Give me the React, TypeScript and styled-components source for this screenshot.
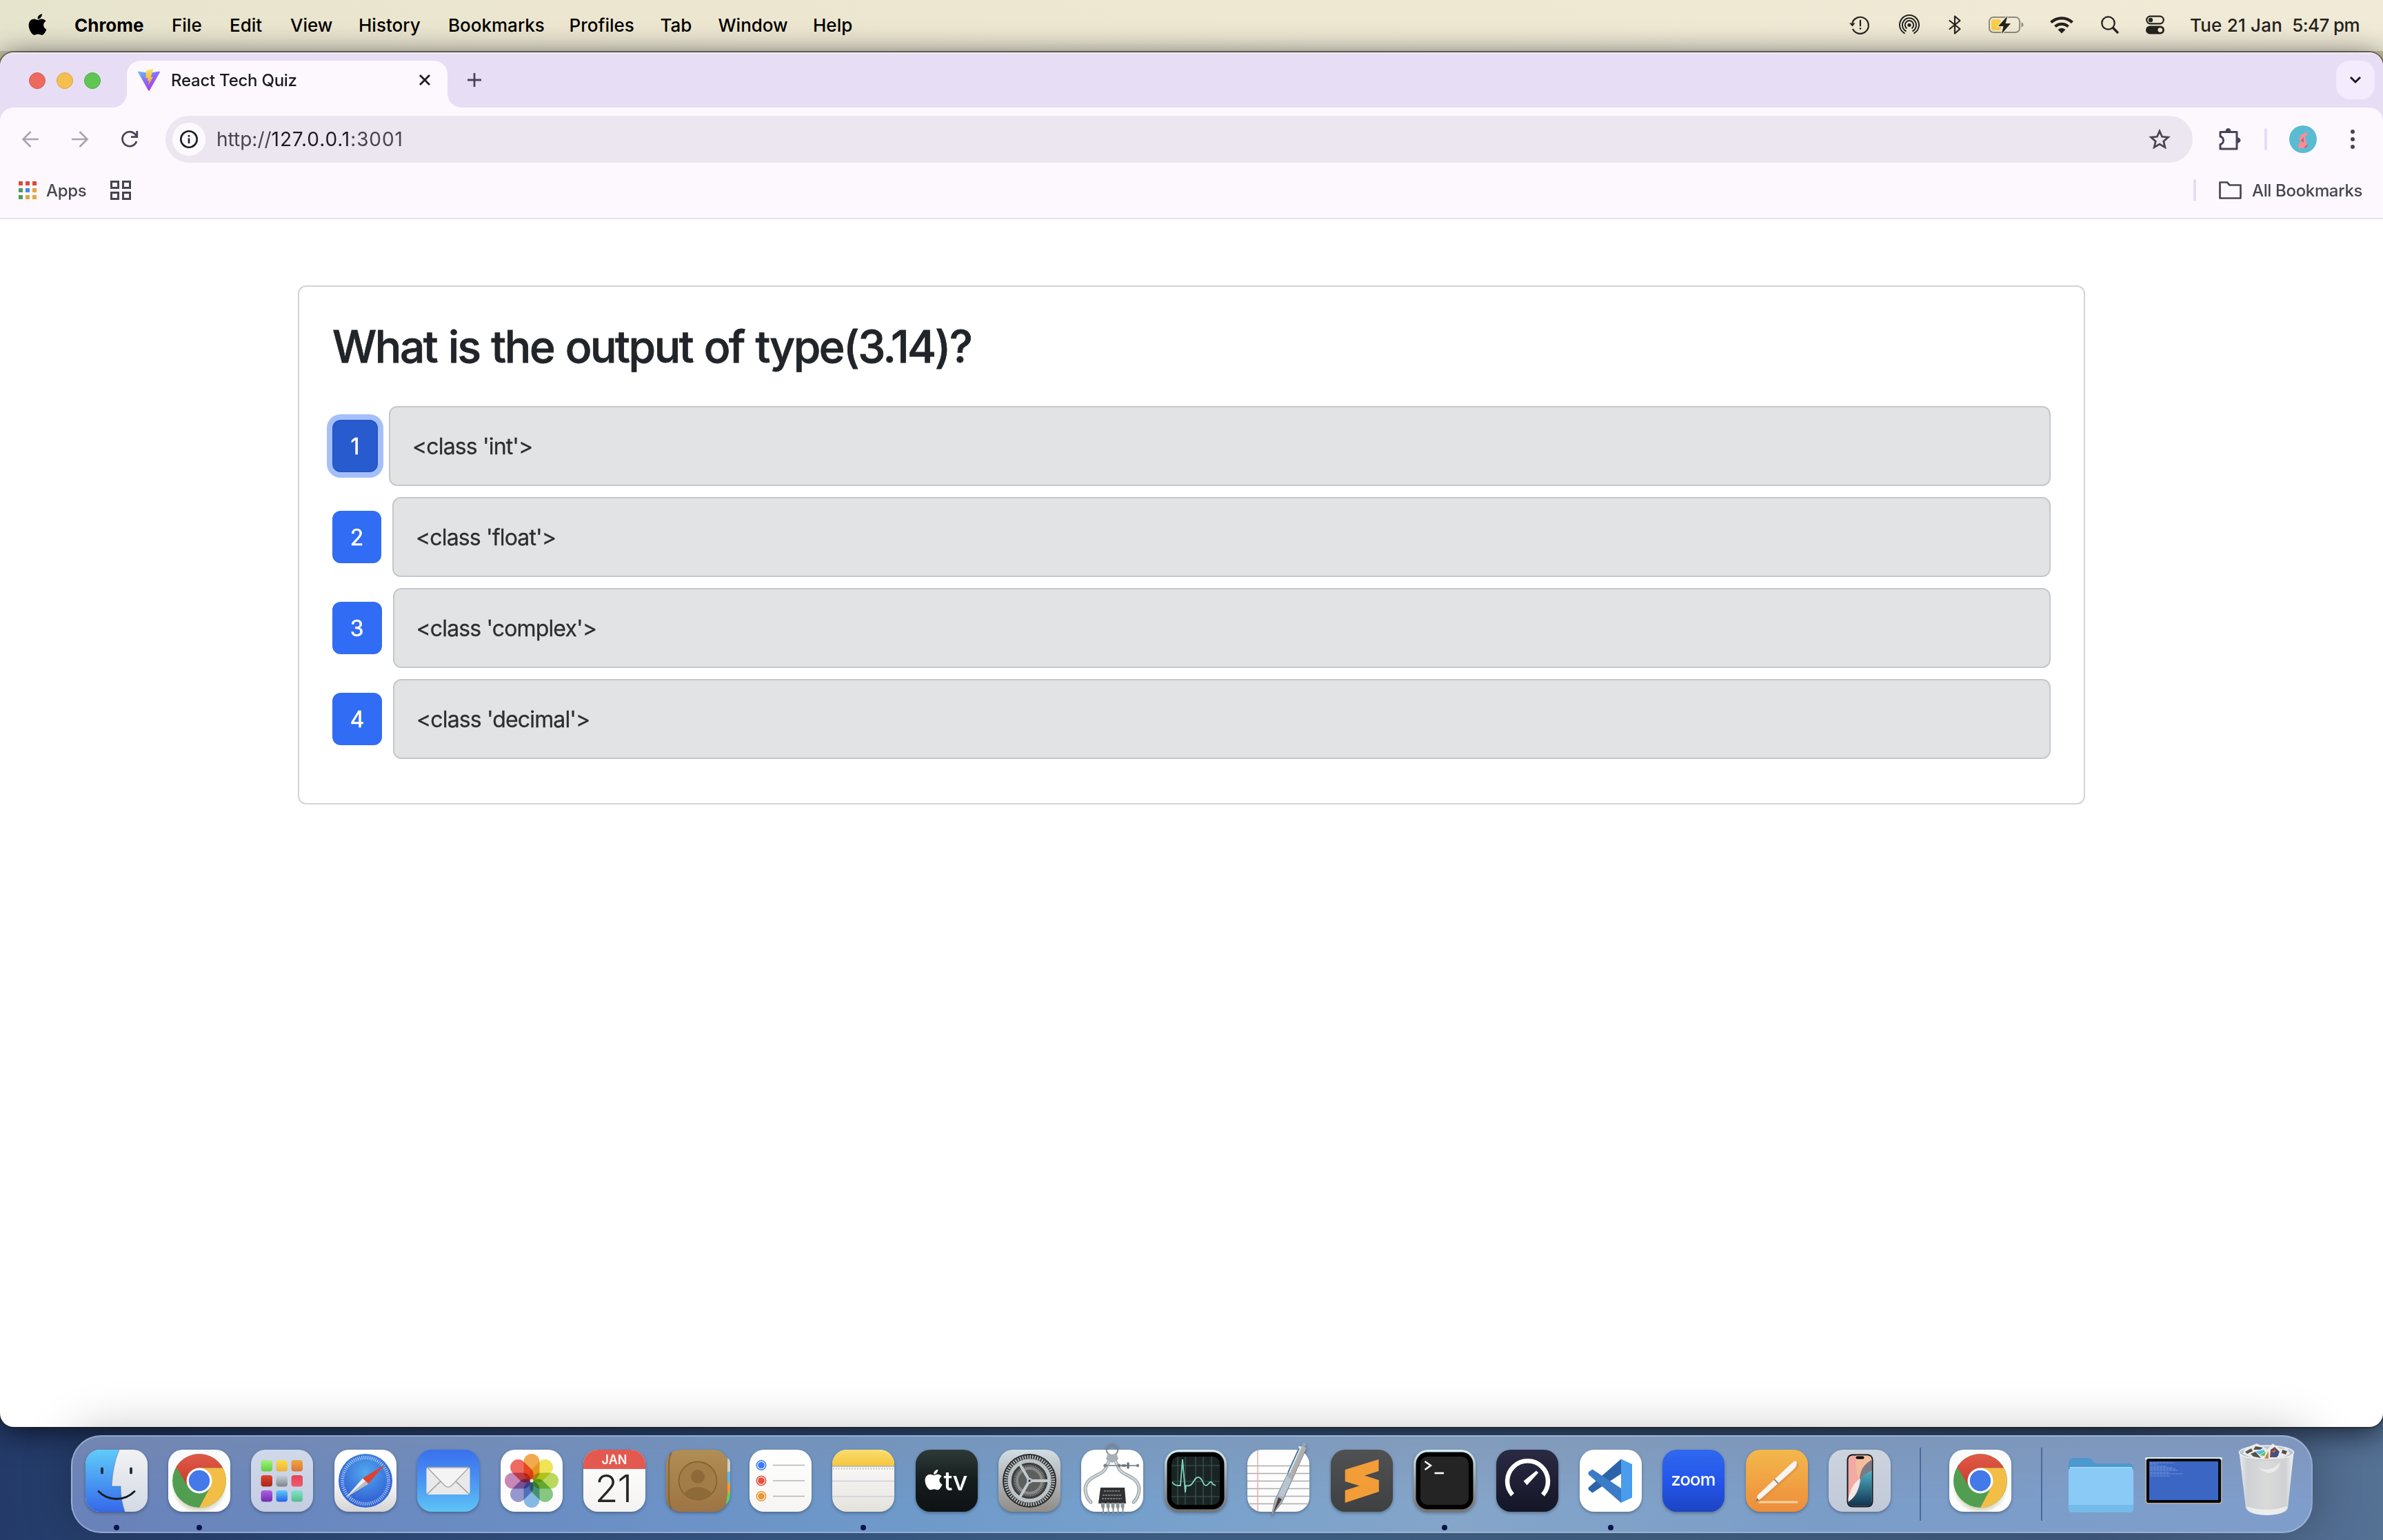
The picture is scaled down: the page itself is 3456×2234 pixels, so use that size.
import React from "react";
import styled, { createGlobalStyle } from "styled-components";
import { FaApple } from "react-icons/fa";

const GlobalStyle = createGlobalStyle`
  * { box-sizing: border-box; }
  body { margin: 0; font-family: Inter, "Liberation Sans", sans-serif; }
  svg { display: block; flex: none; overflow: visible; }
`;

const Desktop = styled.div`
  width: 3456px;
  height: 2234px;
  display: flex;
  flex-direction: column;
  overflow: hidden;
  background:
    linear-gradient(180deg, #cdc6a2 0, #cdc6a2 120px, transparent 121px),
    linear-gradient(90deg, #243b69 0%, #2d4a7a 12%, #395a8a 30%, #43678f 50%, #446488 70%, #435d84 88%, #557194 100%);
`;

/* ---------- menu bar ---------- */
const MenuBar = styled.header`
  height: 74px;
  flex: none;
  display: flex;
  align-items: center;
  padding: 0 34px 2px 37px;
  background: linear-gradient(90deg, #e7e4ce, #ece6d0 25%, #eee8d3 60%, #f0ead6);
  color: #000;
  font-size: 26px;
  font-weight: 500;
`;
const AppleSlot = styled.div`
  width: 71px;
  display: flex;
  padding-bottom: 2px;
`;
const MenuItem = styled.span<{ $w: number; $bold?: boolean }>`
  width: ${(p) => p.$w}px;
  flex: none;
  white-space: nowrap;
  font-weight: ${(p) => (p.$bold ? 700 : 500)};
`;
const StatusArea = styled.div`
  margin-left: auto;
  display: flex;
  align-items: center;
  color: #24231e;
`;
const StatusSlot = styled.div<{ $ml: number }>`
  margin-left: ${(p) => p.$ml}px;
`;
const Clock = styled.div`
  width: 246px;
  margin-left: 37px;
  display: flex;
  justify-content: space-between;
  white-space: nowrap;
`;
const ClockPart = styled.span<{ $ls: number }>`
  letter-spacing: ${(p) => p.$ls}px;
`;

/* ---------- browser window ---------- */
const Window = styled.main`
  height: 1994px;
  margin-top: 2px;
  flex: none;
  display: flex;
  flex-direction: column;
  background: #fff;
  border-radius: 20px;
  overflow: hidden;
  box-shadow: 0 0 0 2px rgba(40, 34, 20, 0.5);
`;
const WindowShade = styled.div`
  flex: none;
  filter: drop-shadow(0 8px 22px rgba(4, 8, 22, 0.75));
`;
const TabStrip = styled.div`
  height: 80px;
  flex: none;
  display: flex;
  align-items: flex-end;
  padding: 0 12px 0 42px;
  background: linear-gradient(#f5effc 0, #e7def5 3px);
`;
const Lights = styled.div`
  width: 142px;
  height: 80px;
  display: flex;
  align-items: center;
  gap: 16px;
  padding-top: 2px;
`;
const Light = styled.i<{ $c: string; $b: string }>`
  width: 24px;
  height: 24px;
  border-radius: 50%;
  background: ${(p) => p.$c};
  border: 1px solid ${(p) => p.$b};
`;
const Tab = styled.div`
  position: relative;
  width: 465px;
  height: 68px;
  display: flex;
  align-items: center;
  padding: 0 25px 12px 16px;
  border-radius: 20px 20px 0 0;
  background: #fcf8fe;
  color: #1d1b20;
  font-size: 24px;
  font-weight: 500;
  &::before,
  &::after {
    content: "";
    position: absolute;
    bottom: 0;
    width: 20px;
    height: 20px;
  }
  &::before {
    left: -20px;
    background: radial-gradient(circle at 0 0, transparent 19.5px, #fcf8fe 20px);
  }
  &::after {
    right: -20px;
    background: radial-gradient(circle at 100% 0, transparent 19.5px, #fcf8fe 20px);
  }
`;
const TabTitle = styled.span`
  margin-left: 16px;
  flex: 1;
  letter-spacing: -0.25px;
`;
const NewTab = styled.div`
  height: 80px;
  margin-left: 29px;
  display: flex;
  align-items: center;
`;
const TabSearch = styled.div`
  width: 56px;
  height: 56px;
  margin: 0 0 12px auto;
  border-radius: 20px;
  background: #f4ecfd;
  display: grid;
  place-items: center;
`;
const Chrome = styled.div`
  flex: none;
  background: #e7def5;
`;
const ChromeInner = styled.div`
  height: 162px;
  background: #fcf8fe;
  border-radius: 20px 20px 0 0;
  border-bottom: 2px solid #e5e0ec;
`;
const Toolbar = styled.div`
  height: 92px;
  display: flex;
  align-items: center;
  padding: 0 40px 0 32px;
`;
const NavIcons = styled.div`
  width: 208px;
  display: flex;
  gap: 48px;
`;
const Omnibox = styled.div`
  width: 2940px;
  height: 68px;
  display: flex;
  align-items: center;
  padding: 0 32px 0 10px;
  border-radius: 34px;
  background: #ece6f0;
  color: #47454e;
  font-size: 28px;
`;
const SiteInfo = styled.div`
  width: 48px;
  height: 48px;
  border-radius: 50%;
  background: #fdfaff;
  display: grid;
  place-items: center;
`;
const Url = styled.span`
  margin-left: 16px;
  flex: 1;
  letter-spacing: 0.9px;
  b {
    font-weight: 400;
    color: #1d1b20;
  }
`;
const UrlScheme = styled.span`
  letter-spacing: 0;
`;
const Divider = styled.i<{ $ml: number; $mr: number }>`
  width: 4px;
  height: 32px;
  border-radius: 2px;
  margin: 0 ${(p) => p.$mr}px 0 ${(p) => p.$ml}px;
  background: #e5dcf8;
`;
const ExtSlot = styled.div`
  margin-left: 37px;
`;
const Dots = styled.div`
  margin-left: 49px;
  display: flex;
  flex-direction: column;
  gap: 5px;
  i {
    width: 6px;
    height: 6px;
    border-radius: 50%;
    background: #494455;
  }
`;
const BookmarksBar = styled.div`
  height: 68px;
  padding: 0 30px 12px 27px;
  display: flex;
  align-items: center;
  color: #47454e;
  font-size: 24px;
  font-weight: 500;
`;
const AppsGrid = styled.div`
  display: grid;
  grid-template-columns: repeat(3, 6px);
  gap: 4px;
`;
const AppsDot = styled.i<{ $c: string }>`
  height: 6px;
  background: ${(p) => p.$c};
`;
const BookmarkLabel = styled.span<{ $ml: number; $w: number }>`
  margin-left: ${(p) => p.$ml}px;
  width: ${(p) => p.$w}px;
  white-space: nowrap;
  letter-spacing: -0.35px;
`;
const SquaresGrid = styled.div`
  margin-left: 34px;
  display: grid;
  grid-template-columns: repeat(2, 13px);
  gap: 4px;
  i {
    height: 12px;
    border: 3px solid #47454e;
  }
`;

/* ---------- quiz page ---------- */
const Page = styled.section`
  flex: 1;
  padding: 96px 432px 0;
`;
const Card = styled.article`
  height: 753px;
  padding: 48px;
  border: 2px solid #d3d4d5;
  border-radius: 12px;
  background: #fff;
`;
const Question = styled.h2`
  margin: 0 0 48px;
  font-size: 64px;
  line-height: 77px;
  font-weight: 500;
  letter-spacing: -2.4px;
  word-spacing: 2px;
  -webkit-text-stroke: 0.8px #212529;
  color: #212529;
  white-space: nowrap;
`;
const OptionRow = styled.div`
  display: flex;
  align-items: center;
  gap: 16px;
  margin-bottom: 16px;
`;
const OptionButton = styled.button<{ $w: number; $active?: boolean }>`
  width: ${(p) => p.$w}px;
  height: 76px;
  flex: none;
  padding: 1px 0 0;
  border: 2px solid ${(p) => (p.$active ? "#2556c2" : "#316cf4")};
  border-radius: 12px;
  background: ${(p) => (p.$active ? "#285bce" : "#316cf4")};
  box-shadow: ${(p) => (p.$active ? "0 0 0 8px #a4bffb" : "none")};
  color: #fff;
  -webkit-text-stroke: 0.5px #fff;
  font: 400 32px/48px Inter, sans-serif;
`;
const OptionText = styled.div`
  flex: 1;
  padding: 33px 32px 31px;
  border: 2px solid #c4c8cb;
  border-radius: 12px;
  background: #e2e3e5;
  color: #2b2f32;
  font-size: 32px;
  line-height: 48px;
  letter-spacing: -0.85px;
  -webkit-text-stroke: 0.3px #2b2f32;
`;

/* ---------- dock ---------- */
const Dock = styled.nav`
  position: relative;
  width: 3251px;
  height: 142px;
  margin: 12px 0 0 103px;
  flex: none;
  display: flex;
  align-items: stretch;
  padding: 0 3.5px;
  border: 2px solid rgba(190, 208, 232, 0.45);
  border-radius: 44px;
  background:
    linear-gradient(180deg, rgba(128, 140, 165, 0.4), rgba(120, 150, 190, 0) 70%),
    linear-gradient(90deg, #6982b9 0%, #6a8dc4 20%, #6e9aca 38%, #78a1cc 50%, #85a5c9 62%, #7a9dc8 78%, #7f9dcb 100%);
  box-shadow: 0 -4px 70px rgba(0, 0, 0, 0.26);
`;
const DockSlot = styled.div`
  width: 120.4px;
  flex: none;
  display: flex;
  flex-direction: column;
  align-items: center;
  padding-top: 19px;
`;
const RunningDot = styled.i`
  width: 8px;
  height: 8px;
  margin-top: 19px;
  border-radius: 50%;
  background: #06164a;
`;
const DockLine = styled.i<{ $ml: number; $mr: number }>`
  width: 2px;
  height: 106px;
  margin: 16px ${(p) => p.$mr}px 0 ${(p) => p.$ml}px;
  background: #49699a;
`;

const Tile = ({ fill, children, id }: { fill: string[]; id: string; children?: React.ReactNode }) => (
  <svg width="90" height="90" viewBox="0 0 90 90" filter="drop-shadow(0 2px 2px rgba(0,0,0,.3))">
    <defs>
      <linearGradient id={id} x1="0" y1="0" x2="0" y2="1">
        {fill.map((c, i) => (
          <stop key={i} offset={fill.length > 1 ? i / (fill.length - 1) : 0} stopColor={c} />
        ))}
      </linearGradient>
      <clipPath id={id + "-clip"}>
        <rect width="90" height="90" rx="21" />
      </clipPath>
    </defs>
    <rect width="90" height="90" rx="21" fill={`url(#${id})`} />
    {children}
  </svg>
);

const Finder = () => (
  <Tile id="finder" fill={["#f2f2f4", "#d2dae4"]}>
    <defs>
      <linearGradient id="finder-b" x1="0" y1="0" x2="0" y2="1">
        <stop stopColor="#5fcbfa" />
        <stop offset="1" stopColor="#3568ea" />
      </linearGradient>
    </defs>
    <g clipPath="url(#finder-clip)">
      <path d="M0 0H49C42 16 39 34 38 53H51C51 66 53 79 57 90H0Z" fill="url(#finder-b)" />
    </g>
    <path d="M49 0C42 16 39 34 38 53H51C51 66 53 79 57 90" fill="none" stroke="#2b4c80" strokeOpacity=".35" strokeWidth="1.2" />
    <path d="M24 27.500v6M66 27.500v6" stroke="#20303e" strokeWidth="4" strokeLinecap="round" />
    <path d="M19 60.500C33 75 57 75 71 60.500" fill="none" stroke="#161c24" strokeWidth="3" strokeLinecap="round" />
  </Tile>
);

const ChromeIcon = ({ id }: { id: string }) => (
  <Tile id={id} fill={["#f8fafc", "#fff"]}>
    <defs>
      <radialGradient id={id + "-sh"}>
        <stop offset=".7" stopColor="#8a8a50" stopOpacity=".5" />
        <stop offset="1" stopColor="#8a8a50" stopOpacity="0" />
      </radialGradient>
      <linearGradient id={id + "-r"} x1="0" y1="0" x2="0" y2="1">
        <stop stopColor="#e05a48" />
        <stop offset="1" stopColor="#c83b2c" />
      </linearGradient>
    </defs>
    <g clipPath={`url(#${id}-clip)`}>
      <ellipse cx="45" cy="55" rx="40" ry="38" fill={`url(#${id}-sh)`} />
    </g>
    <circle cx="45" cy="45" r="39" fill="#519e50" />
    <path d="M45 26.500H79.100A39 39 0 0 0 11.500 25L29 54.250Z" fill={`url(#${id}-r)`} />
    <path d="M45 26.500H79.100A39 39 0 0 1 45 84L61 54.250Z" fill="#f3be45" />
    <circle cx="45" cy="45" r="18.500" fill="#fff" />
    <circle cx="45" cy="45" r="15.200" fill="#4379e8" />
  </Tile>
);

const padColors = [
  ["#a1f277", "#66cc47"], ["#f8dc4e", "#efb03a"], ["#f1a741", "#dc7436"],
  ["#e2452f", "#a82618"], ["#c9d3da", "#7f8487"], ["#e8435a", "#ee5b6a"],
  ["#b060e0", "#6f2cb0"], ["#5bcbf8", "#2a5ee6"], ["#7fe6cf", "#58b98a"],
];
const Launchpad = () => (
  <Tile id="pad" fill={["#cfd9ea", "#c5cde2"]}>
    {padColors.map(([a, b], i) => (
      <g key={i}>
        <defs>
          <linearGradient id={"pad" + i} x1="0" y1="0" x2="0" y2="1">
            <stop stopColor={a} />
            <stop offset="1" stopColor={b} />
          </linearGradient>
        </defs>
        <rect x={14.5 + (i % 3) * 22} y={15 + Math.floor(i / 3) * 22} width="16.500" height="16.500" rx="4" fill={`url(#pad${i})`} />
      </g>
    ))}
  </Tile>
);

const Safari = () => (
  <Tile id="safari" fill={["#ffffff", "#fafafa", "#d5d5d5"]}>
    <defs>
      <radialGradient id="saf-b" cx=".5" cy=".35">
        <stop stopColor="#52a9ee" />
        <stop offset="1" stopColor="#3468d6" />
      </radialGradient>
    </defs>
    <circle cx="45" cy="45" r="39" fill="url(#saf-b)" />
    <circle cx="45" cy="45" r="33.500" fill="none" stroke="#d9ecff" strokeWidth="5" strokeDasharray="1 1.924" opacity=".85" />
    <path d="M73 22L41 41.500L49 49.500Z" fill="#e0402f" />
    <path d="M17 69L41 41.500L49 49.500Z" fill="#f0f0f0" />
    <path d="M17 69L45 45.500L49 49.500Z" fill="#b9bdc4" />
  </Tile>
);

const Mail = () => (
  <Tile id="mail" fill={["#3a70ee", "#4a94f2", "#5ec4f6"]}>
    <rect x="13.500" y="25" width="63" height="40" rx="4" fill="#e9e9ea" />
    <path d="M15 64L37 43M75 64L53 43" stroke="#9a9a9c" strokeWidth="1.500" />
    <path d="M15 26L39 51C43 55.500 47 55.500 51 51L75 26Z" fill="#f4f4f5" stroke="#a2a2a5" strokeWidth="1.300" />
  </Tile>
);

const petals = ["#f19a2e", "#ecdf3a", "#aed142", "#72bd6b", "#6fade0", "#8585c8", "#bd72ab", "#ee5046"];
const PetalGroup = styled.g`
  isolation: isolate;
  rect {
    mix-blend-mode: multiply;
  }
`;
const Photos = () => (
  <Tile id="photos" fill={["#ffffff", "#fbfbfb"]}>
    <PetalGroup>
      {petals.map((c, i) => (
        <rect key={c} x="33.500" y="6" width="23" height="38" rx="11.500" fill={c} fillOpacity=".85" transform={`rotate(${i * 45} 45 45)`} />
      ))}
    </PetalGroup>
    <circle cx="45" cy="45" r="2.500" fill="#efe6d8" />
  </Tile>
);

const Calendar = () => (
  <Tile id="cal" fill={["#ffffff", "#f4f3f1"]}>
    <g clipPath="url(#cal-clip)">
      <rect width="90" height="28" fill="#e4594f" />
    </g>
    <text x="45" y="20.500" textAnchor="middle" fontSize="18" fontWeight="600" fill="#fff">JAN</text>
    <text x="43.500" y="76" textAnchor="middle" fontSize="55" fontWeight="300" letterSpacing="-1" fill="#262626">21</text>
  </Tile>
);

const Contacts = () => (
  <Tile id="contacts" fill={["#b08e54", "#9d7444"]}>
    <path d="M89 12q5 3 4 10v10h-4z" fill="#d0cfc6" />
    <path d="M89 32h4v16h-4z" fill="#62b8ea" />
    <path d="M89 48h4v16h-4z" fill="#f09a3a" />
    <path d="M89 63h4q0 12-6 16z" fill="#62cf5c" />
    <path d="M8 4Q4 10 4 22V68Q4 80 8 86" fill="none" stroke="#805c30" strokeWidth="2.500" opacity=".7" />
    <circle cx="46" cy="45" r="27.500" fill="#a27d48" stroke="#86642f" strokeWidth="1.800" />
    <circle cx="46" cy="39" r="10" fill="#8d6a37" />
    <path d="M26 64A21 14 0 0 1 66 64A27.500 27.500 0 0 1 26 64Z" fill="#8d6a37" />
  </Tile>
);

const Reminders = () => (
  <Tile id="rem" fill={["#ffffff", "#f6f5f3"]}>
    {["#3b7cf5", "#e6503f", "#ea9634"].map((c, i) => (
      <g key={c}>
        <circle cx="17" cy={22.500 + i * 22.500} r="6.700" fill="none" stroke={c} strokeWidth="1.600" />
        <circle cx="17" cy={22.500 + i * 22.500} r="4.800" fill={c} />
        <path d={`M34 ${22.500 + i * 22.500}H80`} stroke="#b5b4bb" strokeWidth="1.600" />
      </g>
    ))}
  </Tile>
);

const Notes = () => (
  <Tile id="notes" fill={["#ffffff", "#f2f1ef", "#e3e2dc"]}>
    <defs>
      <linearGradient id="notes-y" x1="0" y1="0" x2="0" y2="1">
        <stop stopColor="#f9de71" />
        <stop offset="1" stopColor="#f5c63c" />
      </linearGradient>
    </defs>
    <g clipPath="url(#notes-clip)">
      <rect width="90" height="23" fill="url(#notes-y)" />
      <path d="M0 24H90" stroke="#aaa491" strokeWidth="1.600" />
      <path d="M1 27.500H90" stroke="#b5b3ad" strokeWidth="2" strokeDasharray="1.500 2.400" />
      <path d="M0 45.500H90M0 68H90" stroke="#cfced3" strokeWidth="1.600" />
    </g>
  </Tile>
);

const AppleTv = () => (
  <Tile id="tv" fill={["#2c3a38", "#161c1d", "#0e1215"]}>
    <FaApple x="9" y="26.500" size={34} color="#fff" />
    <text x="40.500" y="59" fontSize="38" fontWeight="500" letterSpacing="-.8" fill="#fff">tv</text>
  </Tile>
);

const Settings = () => (
  <Tile id="set" fill={["#d2dde3", "#b0b3b5", "#918d87"]}>
    <circle cx="45" cy="45" r="39" fill="#2b2c2c" />
    <circle cx="45" cy="45" r="34.500" fill="none" stroke="#b9c0c4" strokeWidth="5" strokeDasharray="1.800 1.813" />
    <circle cx="45" cy="45" r="29" fill="#3e3f3e" stroke="#bcc3c6" strokeWidth="5.500" />
    <circle cx="45" cy="45" r="21.500" fill="none" stroke="#8b8f8f" strokeWidth="3" strokeDasharray="1.200 1.214" />
    <circle cx="45" cy="45" r="18" fill="#5d5f5e" stroke="#858988" strokeWidth="4" />
    <path d="M45 45H74M45 45L30.500 19.900M45 45L30.500 70.100" stroke="#c3cacd" strokeWidth="4" />
    <circle cx="45" cy="45" r="4" fill="#b9c0c4" />
    <circle cx="45" cy="45" r="1.500" fill="#222" />
  </Tile>
);

const SystemInfo = () => (
  <Tile id="info" fill={["#ffffff", "#ffffff"]}>
    <g fill="none" strokeLinecap="round">
      <circle cx="45" cy="0" r="8.300" stroke="#81878a" strokeWidth="2" />
      <path d="M42 13L35 28C30 38 6 38 6 58Q7 70 14 76" stroke="#9aa3a8" strokeWidth="5" />
      <path d="M42 13L35 28C30 38 6 38 6 58Q7 70 14 76" stroke="#cfd6da" strokeWidth="2.500" />
      <path d="M48 13L55 28C60 38 84 38 84 58Q83 70 76 76" stroke="#9aa3a8" strokeWidth="5" />
      <path d="M48 13L55 28C60 38 84 38 84 58Q83 70 76 76" stroke="#cfd6da" strokeWidth="2.500" />
      <path d="M33 23H82" stroke="#8e969b" strokeWidth="2" />
      <path d="M60 23H64M68 20V26" stroke="#6b7378" strokeWidth="3.500" />
    </g>
    <path d="M39 4L45 8L51 4L54 14L45 19L36 14Z" fill="#a8b0b5" />
    <circle cx="35" cy="23" r="2.500" fill="#7b8287" />
    <circle cx="55" cy="23" r="2.500" fill="#7b8287" />
    <circle cx="82" cy="23" r="2.200" fill="#7b8287" />
    <path d="M28 55H63L65 78H25Z" fill="#303132" />
    <path d="M33 60H57M31 66H59M30 71H59" stroke="#747779" strokeWidth="2" strokeDasharray="3 1" />
    {[29, 36.500, 43.500, 50.500, 57.500].map((x) => (
      <path key={x} d={`M${x} 77h5v6l-1 3v7h-2v-7l-2-3z`} fill="#8d9499" />
    ))}
  </Tile>
);

const Bezel = ({ inner }: { inner: string }) => (
  <>
    <rect x="3.500" y="3.500" width="83" height="83" rx="17" fill="#000" />
    <rect x="10" y="10" width="70" height="70" rx="10" fill={inner} />
  </>
);

const Activity = () => (
  <Tile id="act" fill={["#d4ebf0", "#98a1a6", "#77726e"]}>
    <Bezel inner="#1b2424" />
    <path d="M10 23H80M10 46H80M10 68H80M19 10V80M30 10V80M45 10V80M56 10V80M68 10V80" stroke="#3d5852" strokeWidth="1.200" />
    <path d="M11 47Q14 52 20 52L23 52L26 14L30 62L31 52Q38 54 42 46Q49 34 55 46Q59 56 64 49Q67 44 70 50L74 52" fill="none" stroke="#7fd6bd" strokeWidth="1.800" />
  </Tile>
);

const TextEdit = () => (
  <Tile id="te" fill={["#ffffff", "#fafafa"]}>
    <g clipPath="url(#te-clip)">
      <path d="M0 23.500H90M0 34.500H90M0 45.500H90M0 56.500H90M0 67.500H90M0 78.500H90" stroke="#aaabad" strokeWidth="1.300" />
      <path d="M15 0V90" stroke="#efaaa5" strokeWidth="1.500" />
    </g>
    <path d="M35 96L40 73L78 -6L86 -3L50 77Z" fill="#a6b4c1" stroke="#7c8791" strokeWidth="1" />
    <path d="M83 -4L62 45" stroke="#cfa57a" strokeWidth="1.500" />
    <path d="M77 -5L60 33" stroke="#d4e9f8" strokeWidth="4" />
    <path d="M75 -2L59 33" stroke="#45566a" strokeWidth="1.500" />
    <path d="M57 38L45 66L52 69L64 43Z" fill="#b9c5d2" />
    <path d="M45 69L50 72L37 93Z" fill="#573d3c" />
    <path d="M80 -8L84 -6" stroke="#93a9bb" strokeWidth="6" />
  </Tile>
);

const Sublime = () => (
  <Tile id="sub" fill={["#505152", "#3f4041"]}>
    <path d="M69.500 44V61L20.700 77V59L41 52.500Z" fill="#f29d38" />
    <path d="M40 52L69.500 44V61Z" fill="#d5802a" />
    <path d="M69.500 14V31L49 37.500L69.500 44V61L20.700 46V29Z" fill="#f29d38" />
  </Tile>
);

const Terminal = () => (
  <Tile id="term" fill={["#d6edf2", "#98a1a6", "#77726e"]}>
    <Bezel inner="#242424" />
    <path d="M16.500 17L25 23L16.500 29" fill="none" stroke="#fff" strokeWidth="2.400" />
    <path d="M30.500 34H44" stroke="#fff" strokeWidth="2.600" />
  </Tile>
);

const Speedtest = () => (
  <Tile id="speed" fill={["#2a2b43", "#141526"]}>
    <path d="M23.500 65.500A29.500 29.500 0 1 1 67.500 65.500" fill="none" stroke="#fff" strokeWidth="6.500" />
    <path d="M58 30.500L39.500 45.500L44.500 51.500L61 33.500Z" fill="#fff" />
  </Tile>
);

const VsCode = () => (
  <Tile id="vs" fill={["#ffffff", "#ffffff"]}>
    <path d="M60 13.500V35L18.500 62.500L12.600 58V55Z" fill="#2a63a9" />
    <path d="M18.500 28.500L12.600 32.500V36L60 77V56Z" fill="#3a7bc8" />
    <path d="M60 13.500L76 21V69.500L60 77Z" fill="#4a9cec" />
  </Tile>
);

const Zoom = () => (
  <Tile id="zoom" fill={["#2f68ee", "#2456ec", "#1d44c4"]}>
    <text x="44.500" y="51.500" textAnchor="middle" fontSize="25.500" fontWeight="500" letterSpacing="-.8" fill="#fff">zoom</text>
  </Tile>
);

const Pages = () => (
  <Tile id="pages" fill={["#f3b84c", "#ee8d3a"]}>
    <path d="M19 76H74" stroke="#fbd4a2" strokeWidth="3" strokeLinecap="round" />
    <path d="M14 76L17 66L68 19Q73 14 74 20Q74 24 70 28L23 70Z" fill="#c9814c" opacity=".35" transform="translate(3 2)" />
    <path d="M14 76L17 66L67 19Q73 14 74 19Q74 23 70 28L23 70Z" fill="#f7f4f1" />
    <path d="M41 43L47 49" stroke="#8c857e" strokeWidth="2" />
    <path d="M14 76L16 70L19 73Z" fill="#8c6a4a" />
  </Tile>
);

const IPhone = () => (
  <Tile id="phone" fill={["#ccd4de", "#c2c9d8"]}>
    <defs>
      <clipPath id="ph-c"><rect x="28.500" y="8.500" width="34" height="73" rx="6" /></clipPath>
      <linearGradient id="ph-g" x1="0" y1="0" x2="0" y2="1">
        <stop stopColor="#4fb3c4" />
        <stop offset="1" stopColor="#10304e" />
      </linearGradient>
    </defs>
    <rect x="26.500" y="6.500" width="38" height="77" rx="8" fill="#15181d" />
    <g clipPath="url(#ph-c)">
      <rect x="28" y="8" width="36" height="75" fill="#f3a9a4" />
      <path d="M28 8H64V16Q46 22 45 45Q38 34 40 8Z" fill="#f5bd9b" />
      <path d="M64 14Q44 24 45 46L64 32Z" fill="#7c7a84" />
      <path d="M28 82V74Q42 66 46 44Q52 34 64 30V83Z" fill="url(#ph-g)" />
      <path d="M28 76Q44 66 46 42Q34 48 28 72Z" fill="#f4e7e4" />
    </g>
    <rect x="39.500" y="9.500" width="12" height="4" rx="2" fill="#000" />
  </Tile>
);

const Folder = () => (
  <svg width="94" height="90" viewBox="0 0 94 90">
    <path d="M0 20Q0 12 7 12H28Q32 12 35 16T42 20H87Q94 20 94 27V40H0Z" fill="#4c98cf" />
    <rect y="25" width="94" height="66" rx="6" fill="#89cbf6" />
    <path d="M0 80H94V85Q94 91 88 91H6Q0 91 0 85Z" fill="#74bbe9" />
    <path d="M2 25.700H92" stroke="#a5dbfb" strokeWidth="1.500" />
  </svg>
);

const MiniWindow = () => (
  <svg width="112" height="90" viewBox="0 0 112 90">
    <rect x="0" y="11" width="112" height="68" rx="4" fill="#aba6a3" />
    <rect x="0" y="11" width="112" height="4" rx="2" fill="#dcf0f4" />
    <rect x="2" y="13" width="108" height="64" rx="3" fill="#06080b" />
    <rect x="6" y="17" width="100" height="56" fill="#3b66c4" />
    <path d="M7 19H42M7 21H18M7 24H31M7 26H39M7 28H44M7 30H47M7 33H35M7 35H55M7 38H36" stroke="#7d9add" strokeWidth=".9" strokeDasharray="4 .7" />
  </svg>
);

const Trash = () => (
  <svg width="80" height="90" viewBox="0 0 80 90">
    <defs>
      <linearGradient id="trash" x1="0" y1="0" x2="1" y2="0">
        <stop stopColor="#e9ebef" />
        <stop offset=".15" stopColor="#cfd1d4" />
        <stop offset=".5" stopColor="#dadada" />
        <stop offset=".85" stopColor="#cfd1d3" />
        <stop offset="1" stopColor="#f0f2f5" />
      </linearGradient>
    </defs>
    <path d="M.5 4C12 19 68 19 79.500 4L71 84Q70 94 40 95Q12 94 10 84Z" fill="url(#trash)" />
    <ellipse cx="40" cy="4" rx="39.500" ry="10" fill="#bdc6d4" stroke="#eef1f5" strokeWidth="1.500" />
    <path d="M6 6L8 0L16 -5L26 -9L36 -4L41 0L49 -9L60 -1L70 -2L74 6L64 11L40 14H24Z" fill="#ececea" />
    <path d="M9 3L18 -2L20 2L12 6ZM17 6L24 3L32 12L21 10ZM63 0L70 2L68 7L62 5ZM24 -5L35 -3L31 0L21 0Z" fill="#55514e" />
    <path d="M24 3L36 0L38 3L30 7Z" fill="#4dbfe3" />
    <path d="M30 8L39 3L37 9Z" fill="#6cbb4d" />
    <path d="M46 0L52 -4L59 3L55 11L45 11Z" fill="#6c4a56" />
    <path d="M50 4L58 3L57 9L49 10Z" fill="#34519a" />
    <path d="M47 3L53 0L52 4Z" fill="#d7743a" />
    <path d="M39 9L43 2L43 13H37Z" fill="#c98a4d" />
    <path d="M11 82Q40 92 70 82Q69 94 40 95Q12 94 11 82Z" fill="#f1f2f3" opacity=".8" />
    <path d="M28 26Q46 34 60 18Q58 32 44 34Q34 32 28 26Z" fill="#f0f0f0" opacity=".75" />
  </svg>
);

const dockApps: { icon: React.ReactNode; running?: boolean }[] = [
  { icon: <Finder />, running: true },
  { icon: <ChromeIcon id="chromeA" />, running: true },
  { icon: <Launchpad /> },
  { icon: <Safari /> },
  { icon: <Mail /> },
  { icon: <Photos /> },
  { icon: <Calendar /> },
  { icon: <Contacts /> },
  { icon: <Reminders /> },
  { icon: <Notes />, running: true },
  { icon: <AppleTv /> },
  { icon: <Settings /> },
  { icon: <SystemInfo /> },
  { icon: <Activity /> },
  { icon: <TextEdit /> },
  { icon: <Sublime /> },
  { icon: <Terminal />, running: true },
  { icon: <Speedtest /> },
  { icon: <VsCode />, running: true },
  { icon: <Zoom /> },
  { icon: <Pages /> },
  { icon: <IPhone /> },
];

const menus = [
  { label: "File", w: 84 },
  { label: "Edit", w: 88 },
  { label: "View", w: 99 },
  { label: "History", w: 130 },
  { label: "Bookmarks", w: 175.5 },
  { label: "Profiles", w: 132 },
  { label: "Tab", w: 84 },
  { label: "Window", w: 137.5 },
  { label: "Help", w: 80 },
];

const options = [
  { n: 1, text: "<class 'int'>", w: 66 },
  { n: 2, text: "<class 'float'>", w: 71 },
  { n: 3, text: "<class 'complex'>", w: 71.5 },
  { n: 4, text: "<class 'decimal'>", w: 72 },
];

const appsColors = ["#dc4a3d", "#dc4a3d", "#dc4a3d", "#519e5b", "#4a86ec", "#e2a63c", "#519e5b", "#e2a63c", "#e2a63c"];

const StatusIcons = () => (
  <>
    <svg width="30" height="28" viewBox="0 0 30 28" fill="none" stroke="currentColor" strokeWidth="2.200">
      <path d="M4.300 11.500A12 12 0 1 1 5 20" />
      <path d="M0 11.500L8.500 11.500L4.500 16.500Z" fill="currentColor" stroke="none" />
      <path d="M16 7.500V15.500" strokeLinecap="round" />
      <circle cx="16" cy="19.500" r="1.300" fill="currentColor" stroke="none" />
    </svg>
    <StatusSlot $ml={42}>
      <svg width="30" height="30" viewBox="0 0 30 30" fill="none" stroke="currentColor" strokeWidth="2">
        <path d="M8.500 27.500A14 14 0 1 1 21.500 27.500" />
        <path d="M10.500 24.300A10 10 0 1 1 19.500 24.300" />
        <path d="M11.500 20.300A6.200 6.200 0 1 1 18.500 20.300" />
        <circle cx="15" cy="15.300" r="2.600" fill="currentColor" stroke="none" />
      </svg>
    </StatusSlot>
    <StatusSlot $ml={42}>
      <svg width="18" height="28" viewBox="0 0 18 28" fill="none" stroke="currentColor" strokeWidth="2.200" strokeLinejoin="round" strokeLinecap="round">
        <path d="M1.500 8L16.500 20L9 26.500V1.500L16.500 8L1.500 20" />
      </svg>
    </StatusSlot>
    <StatusSlot $ml={40}>
      <svg width="52" height="26" viewBox="0 0 52 26">
        <rect x="1" y="2" width="44" height="22" rx="6" fill="none" stroke="#8f8b7c" strokeWidth="2" />
        <path d="M47.500 9q3 1.500 3 4t-3 4z" fill="#8f8b7c" />
        <rect x="4" y="5" width="14" height="16" rx="3.500" fill="#f7ce46" />
        <path d="M27.500 0L14 15H21.500L19 26L32 11H24.500Z" fill="currentColor" stroke="#eee8d4" strokeWidth="2.400" paintOrder="stroke" />
      </svg>
    </StatusSlot>
    <StatusSlot $ml={37}>
      <svg width="34" height="26" viewBox="0 0 34 26" fill="none" stroke="currentColor" strokeWidth="4.200">
        <path d="M1.500 9.500A22.500 22.500 0 0 1 32.500 9.500" />
        <path d="M7.500 15.500A14 14 0 0 1 26.500 15.500" />
        <path d="M11.500 20Q17 15.500 22.500 20L17 25.500Z" fill="currentColor" stroke="none" />
      </svg>
    </StatusSlot>
    <StatusSlot $ml={40}>
      <svg width="26" height="26" viewBox="0 0 26 26" fill="none" stroke="currentColor">
        <circle cx="10.500" cy="10.500" r="9.200" strokeWidth="2.300" />
        <path d="M17.500 17.500L24 24" strokeWidth="3.300" strokeLinecap="round" />
      </svg>
    </StatusSlot>
    <StatusSlot $ml={39}>
      <svg width="27" height="28" viewBox="0 0 27 28">
        <rect x="1.200" y="1.700" width="24.600" height="10.600" rx="5.300" fill="none" stroke="currentColor" strokeWidth="2.200" />
        <circle cx="7" cy="7" r="3.200" fill="currentColor" />
        <rect x="0" y="15.500" width="27" height="12" rx="6" fill="currentColor" />
        <circle cx="20.800" cy="21.500" r="3.300" fill="#eee8d4" />
      </svg>
    </StatusSlot>
  </>
);

const ViteLogo = () => (
  <svg width="32" height="32" viewBox="0 0 32 32">
    <defs>
      <linearGradient id="vite-a" x1="0" y1="0" x2=".6" y2="1">
        <stop stopColor="#5fc6fb" />
        <stop offset=".5" stopColor="#8a6cf6" />
        <stop offset="1" stopColor="#b334ee" />
      </linearGradient>
      <linearGradient id="vite-b" x1="0" y1="0" x2="0" y2="1">
        <stop stopColor="#fbe25c" />
        <stop offset="1" stopColor="#f0a735" />
      </linearGradient>
    </defs>
    <path d="M1 3.500L16 6L31 3.500Q32.500 3.500 31.800 5L17 31Q16 32.500 15 31L.2 5Q-.4 3.500 1 3.500Z" fill="url(#vite-a)" />
    <path d="M22.500 0L12 2L11.300 13.500L14.500 13L13.700 17.500L16.200 17L15 24L22 11.500L18.700 12L22.500 0Z" fill="url(#vite-b)" />
  </svg>
);

const Rabbit = () => (
  <svg width="40" height="40" viewBox="0 0 40 40">
    <circle cx="20" cy="20" r="20" fill="#59bcd2" />
    <path d="M16 14L22 11L29 8L24 12.500L28 12L22.500 17L25 24L26 31L22 33H13L13 28L17 22L12 19L16 18Z" fill="#f0919b" />
    <path d="M17 22L21 17L21 25ZM22 33L26 31L27 27L22 31Z" fill="#cf5d6c" />
  </svg>
);

export default function App() {
  return (
    <Desktop>
      <GlobalStyle />
      <MenuBar>
        <AppleSlot>
          <FaApple size={35} />
        </AppleSlot>
        <MenuItem $w={141} $bold>Chrome</MenuItem>
        {menus.map((m) => (
          <MenuItem key={m.label} $w={m.w}>{m.label}</MenuItem>
        ))}
        <StatusArea>
          <StatusIcons />
          <Clock>
            <ClockPart $ls={0.2}>Tue 21 Jan</ClockPart>
            <ClockPart $ls={-0.6}>5:47 pm</ClockPart>
          </Clock>
        </StatusArea>
      </MenuBar>

      <WindowShade>
        <Window>
          <TabStrip>
            <Lights>
              <Light $c="#ec6a5e" $b="#d65a4e" />
              <Light $c="#f4bf4f" $b="#dba840" />
              <Light $c="#61c554" $b="#4fae43" />
            </Lights>
            <Tab>
              <ViteLogo />
              <TabTitle>React Tech Quiz</TabTitle>
              <svg width="16" height="16" viewBox="0 0 16 16" stroke="#1d1b20" strokeWidth="2.800">
                <path d="M1 1L15 15M15 1L1 15" />
              </svg>
            </Tab>
            <NewTab>
              <svg width="20" height="20" viewBox="0 0 20 20" stroke="#494455" strokeWidth="2.800">
                <path d="M10 0V20M0 10H20" />
              </svg>
            </NewTab>
            <TabSearch>
              <svg width="16" height="10" viewBox="0 0 16 10" fill="none" stroke="#1d1b20" strokeWidth="3">
                <path d="M1 1L8 8L15 1" />
              </svg>
            </TabSearch>
          </TabStrip>

          <Chrome>
            <ChromeInner>
              <Toolbar>
                <NavIcons>
                  <svg width="24" height="24" viewBox="0 0 24 24" fill="none" stroke="#a8a3af" strokeWidth="2.600">
                    <path d="M24 12H2M12.500 1L1.500 12L12.500 23" />
                  </svg>
                  <svg width="24" height="24" viewBox="0 0 24 24" fill="none" stroke="#a8a3af" strokeWidth="2.600">
                    <path d="M0 12H22M11.500 1L22.500 12L11.500 23" />
                  </svg>
                  <svg width="24" height="24" viewBox="0 0 24 24" fill="none" stroke="#494455" strokeWidth="2.800">
                    <path d="M22 15A10.500 10.500 0 1 1 21.500 7" />
                    <path d="M22.700 0V8.600H14" />
                  </svg>
                </NavIcons>
                <Omnibox>
                  <SiteInfo>
                    <svg width="26" height="26" viewBox="0 0 26 26" fill="none" stroke="#1d1b20" strokeWidth="2.600">
                      <circle cx="13" cy="13" r="11.700" />
                      <path d="M13 11.500V19M13 7V9.600" />
                    </svg>
                  </SiteInfo>
                  <Url>
                    <UrlScheme>http://</UrlScheme>
                    <b>127.0.0.1</b>:3001
                  </Url>
                  <svg width="32" height="30" viewBox="0 0 32 30" fill="none" stroke="#47454e" strokeWidth="2.800">
                    <path d="M16 3.200L19.600 11.300L28.400 12.100L21.800 18L23.800 26.700L16 22.100L8.200 26.700L10.200 18L3.600 12.100L12.400 11.300Z" />
                  </svg>
                </Omnibox>
                <ExtSlot>
                  <svg width="32" height="34" viewBox="0 0 32 34" fill="none" stroke="#494455" strokeWidth="3">
                    <path d="M3 6.500H27V31H3V24.500Q7.500 23 7.500 18.700T3 13Z" strokeLinejoin="round" />
                    <path d="M10.500 5.500A4 4.500 0 0 1 18.500 5.500ZM28 14.500A4.500 4 0 0 1 28 22.500Z" fill="#494455" stroke="none" />
                  </svg>
                </ExtSlot>
                <Divider $ml={35} $mr={32} />
                <Rabbit />
                <Dots>
                  <i />
                  <i />
                  <i />
                </Dots>
              </Toolbar>
              <BookmarksBar>
                <AppsGrid>
                  {appsColors.map((c, i) => (
                    <AppsDot key={i} $c={c} />
                  ))}
                </AppsGrid>
                <BookmarkLabel $ml={14} $w={60}>Apps</BookmarkLabel>
                <SquaresGrid>
                  <i />
                  <i />
                  <i />
                  <i />
                </SquaresGrid>
                <Divider $ml={2991} $mr={33} />
                <svg width="33" height="26" viewBox="0 0 33 26" fill="none" stroke="#47454e" strokeWidth="2.700" strokeLinejoin="round">
                  <path d="M1.500 1.500H12L15.500 5.500H31.500V24.500H1.500Z" />
                </svg>
                <BookmarkLabel $ml={15} $w={160}>All Bookmarks</BookmarkLabel>
              </BookmarksBar>
            </ChromeInner>
          </Chrome>

          <Page>
            <Card>
              <Question>What is the output of type(3.14)?</Question>
              {options.map((o) => (
                <OptionRow key={o.n}>
                  <OptionButton $w={o.w} $active={o.n === 1}>{o.n}</OptionButton>
                  <OptionText>{o.text}</OptionText>
                </OptionRow>
              ))}
            </Card>
          </Page>
        </Window>
      </WindowShade>

      <Dock>
        {dockApps.map((a, i) => (
          <DockSlot key={i}>
            {a.icon}
            {a.running && <RunningDot />}
          </DockSlot>
        ))}
        <DockLine $ml={27} $mr={26} />
        <DockSlot>
          <ChromeIcon id="chromeB" />
        </DockSlot>
        <DockLine $ml={28} $mr={24} />
        <DockSlot>
          <Folder />
        </DockSlot>
        <DockSlot>
          <MiniWindow />
        </DockSlot>
        <DockSlot>
          <Trash />
        </DockSlot>
      </Dock>
    </Desktop>
  );
}
